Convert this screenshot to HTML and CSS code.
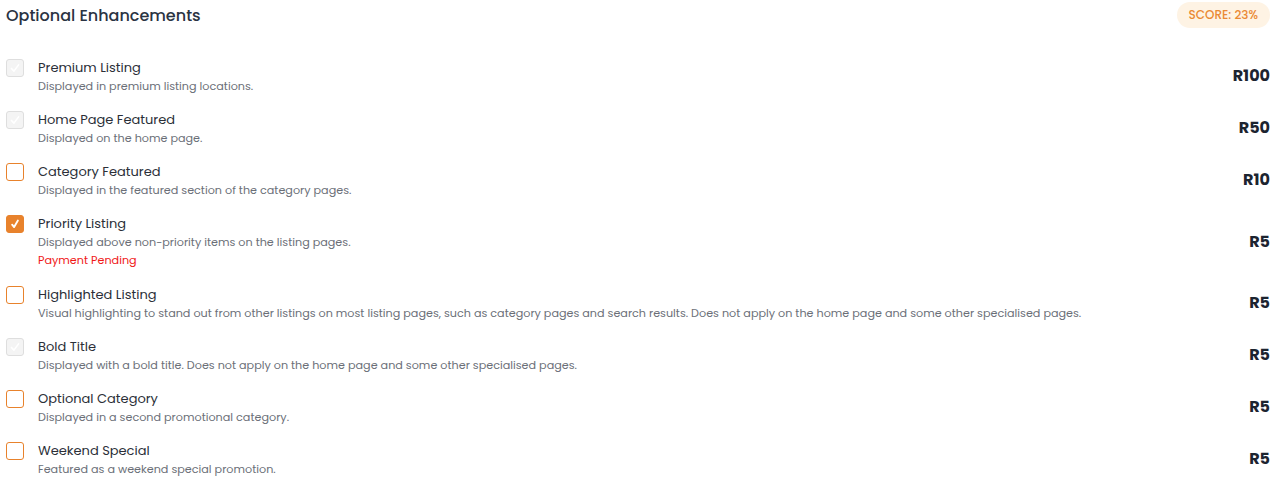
FILE: index.html
```html
<!DOCTYPE html>
<html lang="en">
<head>
<meta charset="utf-8">
<title>Optional Enhancements</title>
<link rel="stylesheet" href="styles.css">
</head>
<body>
<section class="panel">
  <header class="panel-head">
    <h2 class="panel-title">Optional Enhancements</h2>
    <span class="score">SCORE: 23%</span>
  </header>
  <ul class="opts">
    <li class="opt">
      <span class="cb cb-disabled"><svg viewBox="0 0 18 18"><path d="M5 9.5l2.8 3L13 5.5"/></svg></span>
      <div class="opt-body">
        <div class="opt-title">Premium Listing</div>
        <div class="opt-desc">Displayed in premium listing locations.</div>
      </div>
      <div class="price">R100</div>
    </li>
    <li class="opt">
      <span class="cb cb-disabled"><svg viewBox="0 0 18 18"><path d="M5 9.5l2.8 3L13 5.5"/></svg></span>
      <div class="opt-body">
        <div class="opt-title">Home Page Featured</div>
        <div class="opt-desc">Displayed on the home page.</div>
      </div>
      <div class="price">R50</div>
    </li>
    <li class="opt">
      <span class="cb"></span>
      <div class="opt-body">
        <div class="opt-title">Category Featured</div>
        <div class="opt-desc">Displayed in the featured section of the category pages.</div>
      </div>
      <div class="price">R10</div>
    </li>
    <li class="opt">
      <span class="cb cb-checked"><svg viewBox="0 0 18 18"><path d="M5.8 9.8l2.2 2.6L12.2 5.2"/></svg></span>
      <div class="opt-body">
        <div class="opt-title">Priority Listing</div>
        <div class="opt-desc">Displayed above non-priority items on the listing pages.</div>
        <div class="opt-warn">Payment Pending</div>
      </div>
      <div class="price">R5</div>
    </li>
    <li class="opt">
      <span class="cb"></span>
      <div class="opt-body">
        <div class="opt-title">Highlighted Listing</div>
        <div class="opt-desc">Visual highlighting to stand out from other listings on most listing pages, such as category pages and search results. Does not apply on the home page and some other specialised pages.</div>
      </div>
      <div class="price">R5</div>
    </li>
    <li class="opt">
      <span class="cb cb-disabled"><svg viewBox="0 0 18 18"><path d="M5 9.5l2.8 3L13 5.5"/></svg></span>
      <div class="opt-body">
        <div class="opt-title">Bold Title</div>
        <div class="opt-desc">Displayed with a bold title. Does not apply on the home page and some other specialised pages.</div>
      </div>
      <div class="price">R5</div>
    </li>
    <li class="opt">
      <span class="cb"></span>
      <div class="opt-body">
        <div class="opt-title">Optional Category</div>
        <div class="opt-desc">Displayed in a second promotional category.</div>
      </div>
      <div class="price">R5</div>
    </li>
    <li class="opt">
      <span class="cb"></span>
      <div class="opt-body">
        <div class="opt-title">Weekend Special</div>
        <div class="opt-desc">Featured as a weekend special promotion.</div>
      </div>
      <div class="price">R5</div>
    </li>
  </ul>
</section>
</body>
</html>
```
FILE: styles.css
```css
* { box-sizing: border-box; }
html, body { margin: 0; padding: 0; background: #fff; }
body {
  font-family: Poppins, "Open Sans", "DejaVu Sans", sans-serif;
  color: #2b2f38;
}
.panel { padding: 2px 16px 0 6px; }
.panel-head {
  display: flex;
  justify-content: space-between;
  align-items: center;
  height: 26px;
}
.panel-title {
  margin: 0;
  font-size: 16px;
  font-weight: 500;
  color: #2a3342;
}
.score {
  background: #fef3e4;
  color: #ea8a35;
  font-size: 12px;
  font-weight: 500;
  border-radius: 13px;
  height: 26px;
  padding: 0 12px;
  display: inline-flex;
  align-items: center;
}
.opts {
  list-style: none;
  margin: 31px 0 0;
  padding: 0;
  display: flex;
  flex-direction: column;
  gap: 16px;
}
.opt {
  display: flex;
  align-items: center;
}
.cb {
  align-self: flex-start;
  flex: none;
  width: 18px;
  height: 18px;
  border: 1.5px solid #e8822c;
  border-radius: 3px;
  background: #fff;
  display: flex;
  align-items: center;
  justify-content: center;
}
.cb svg { width: 18px; height: 18px; fill: none; stroke-width: 1.8; stroke-linecap: round; stroke-linejoin: round; }
.cb-disabled { border: 1px solid #dedede; background: #f4f4f4; }
.cb-disabled svg { stroke: #ffffff; }
.cb-checked { background: #e8822c; border-color: #e8822c; }
.cb-checked svg { stroke: #fff; stroke-width: 2.2; }
.opt-body { flex: 1; margin-left: 14px; }
.opt-title {
  font-size: 13px;
  line-height: 18px;
  color: #2b2f38;
}
.opt-desc {
  font-size: 11.2px;
  line-height: 18px;
  color: #6b6f78;
}
.opt-warn {
  font-size: 11.2px;
  line-height: 18px;
  margin-bottom: 1px;
  color: #f01818;
}
.price {
  font-size: 16px;
  font-weight: 700;
  color: #1c2430;
  margin: 0 0 3px 16px;
}
```
